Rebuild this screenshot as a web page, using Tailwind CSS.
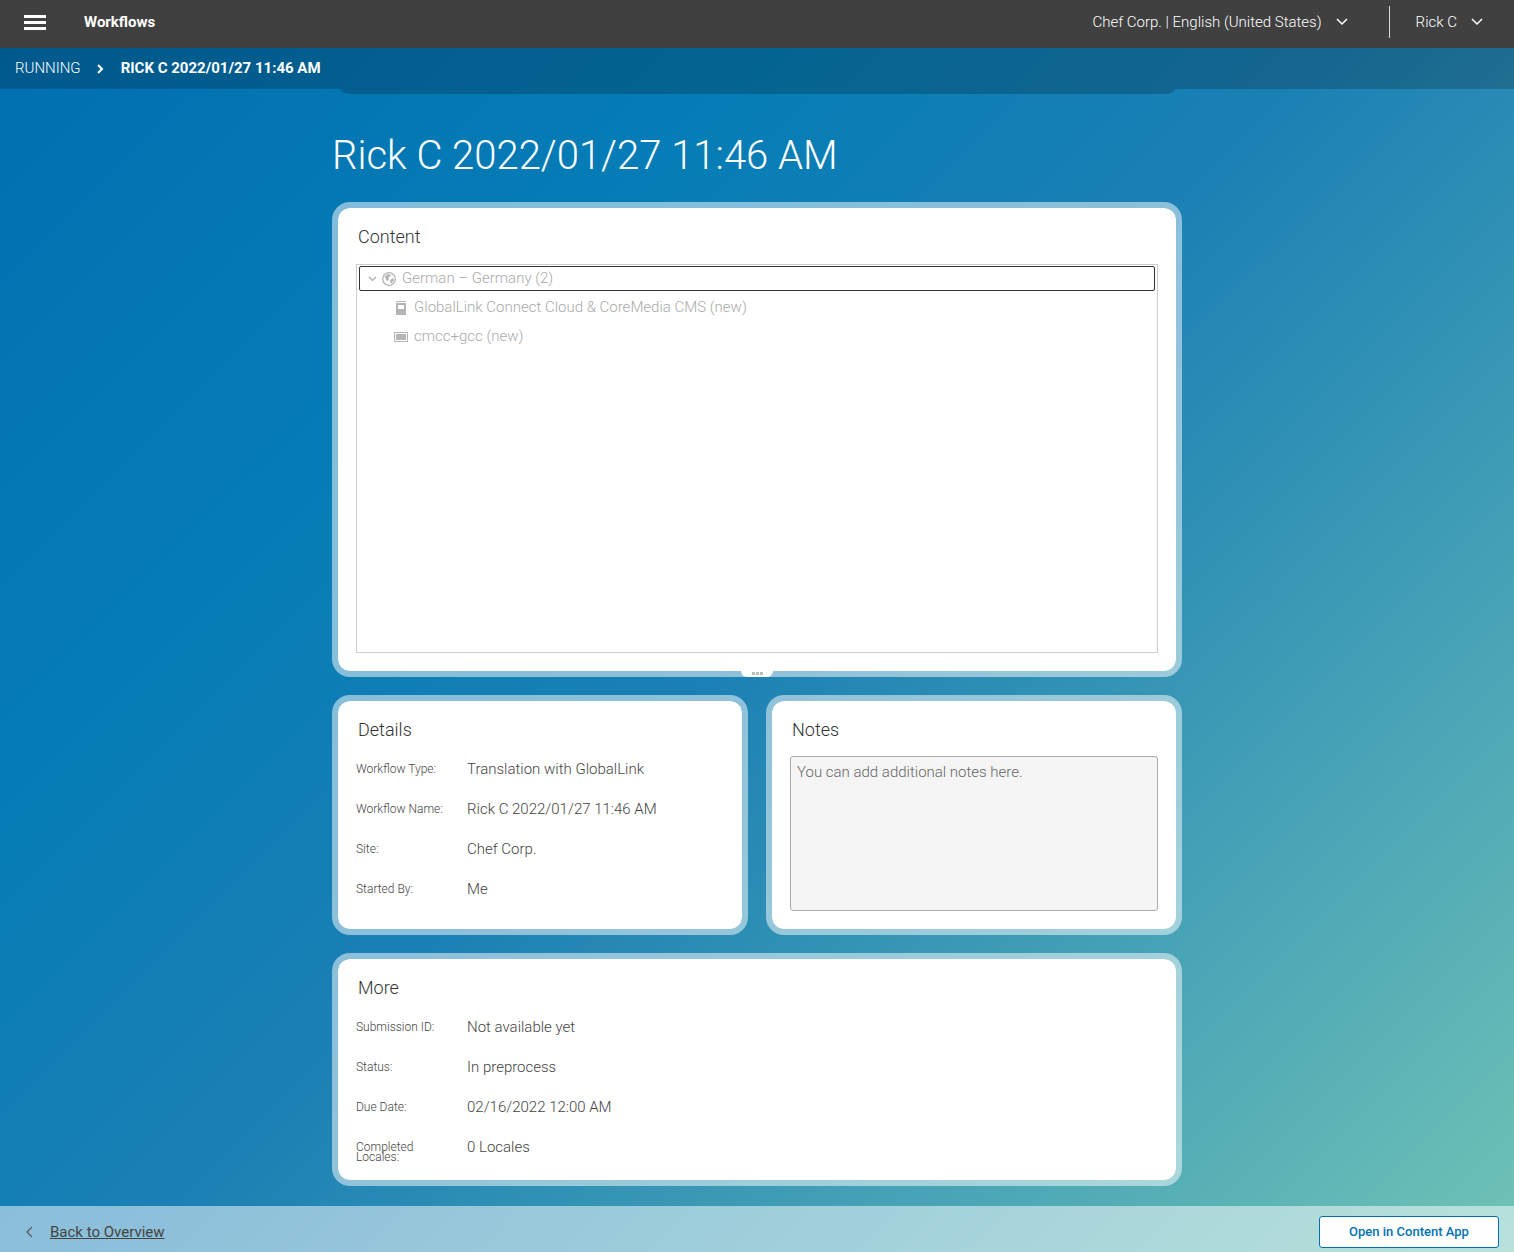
<!DOCTYPE html>
<html lang="en">
<head>
    <meta charset="UTF-8">
    <title>Workflows</title>
    <script src="https://cdn.jsdelivr.net/npm/@tailwindcss/browser@4"></script>
</head>
<body class="font-[Roboto,sans-serif]">
    <div class="relative flex flex-col h-[1252px] overflow-hidden bg-[linear-gradient(135deg,#006fb0_0%,#067db6_30%,#1b80b4_50%,#4aa5b6_78%,#70c3b5_100%)]">

        <!-- Top bar -->
        <header class="flex items-center h-12 pb-1 shrink-0 bg-[#404040] text-white">
            <svg class="ml-6 w-[22px] h-[15px]" viewBox="0 0 22 15" fill="#fff">
                <rect width="22" height="3"/><rect y="6" width="22" height="3"/><rect y="12" width="22" height="3"/>
            </svg>
            <span class="ml-[38px] text-[15px] font-bold">Workflows</span>
            <span class="ml-auto text-[15px] font-light">Chef Corp. | English (United States)</span>
            <svg class="ml-[14px] w-3 h-2" viewBox="0 0 12 8" fill="none" stroke="#fff" stroke-width="1.5"><path d="M1 1l5 5 5-5"/></svg>
            <div class="ml-[41px] w-px h-8 bg-white/80"></div>
            <span class="ml-[26px] text-[15px] font-light">Rick C</span>
            <svg class="ml-[14px] mr-[31px] w-3 h-2" viewBox="0 0 12 8" fill="none" stroke="#fff" stroke-width="1.5"><path d="M1 1l5 5 5-5"/></svg>
        </header>

        <!-- Breadcrumb -->
        <nav class="relative flex items-center h-[41px] shrink-0 pl-[15px] bg-black/20 text-white text-[15px]">
            <span class="font-light">RUNNING</span>
            <svg class="ml-4 w-[7px] h-[10px]" viewBox="0 0 7 10" fill="none" stroke="#fff" stroke-width="2"><path d="M1 1l4 4-4 4"/></svg>
            <span class="ml-[17px] font-bold">RICK C 2022/01/27 11:46 AM</span>
            <div class="absolute left-[340px] top-[41px] w-[835px] h-[5px] rounded-bl-[10px_5px] rounded-br-[10px_5px] bg-black/20"></div>
        </nav>

        <!-- Main column -->
        <main class="w-[850px] mx-auto pt-[42px]">
            <h1 class="h-[50px] mb-[21px] text-[40px] leading-[50px] font-light text-white">Rick C 2022/01/27 11:46 AM</h1>

            <section class="relative h-[475px] mb-[18px] px-[18px] pt-[17px] border-[6px] border-white/50 bg-white bg-clip-padding rounded-[18px]">
                <h2 class="pl-[2px] text-lg leading-6 font-light text-[#333]">Content</h2>
                <div class="h-[389px] mt-[15px] px-[2px] pt-px border border-[#ccc] text-[15px] font-light text-[#aaa]">
                    <div class="flex items-center h-[25px] pl-2 border border-[#333] rounded-[2px]">
                        <svg class="w-[9px] h-[6px]" viewBox="0 0 9 6" fill="none" stroke="#aaa" stroke-width="1.2"><path d="M1 1l3.500 3.500L8 1"/></svg>
                        <svg class="ml-[5px] w-[14px] h-[14px]" viewBox="0 0 14 14">
                            <circle cx="7" cy="7" r="6.300" fill="none" stroke="#b5b5b5" stroke-width="1.300"/>
                            <path d="M2.500 4.500L6 2l3 .8-1 2-1.500.5L7 8 5 9 3.500 6.500zM8 8l3-2 1 2-2.500 3.500L8.500 11z" fill="#b5b5b5"/>
                        </svg>
                        <span class="ml-[6px]">German – Germany (2)</span>
                    </div>
                    <div class="flex items-center h-[29px] mt-[2px] pl-[37px]">
                        <svg class="w-[10px] h-[14px]" viewBox="0 0 10 14" fill="#b5b5b5">
                            <rect width="10" height="1"/><rect y="2" width="10" height="12"/><rect x="2" y="4" width="6" height="4" fill="#fff"/>
                        </svg>
                        <span class="ml-2">GlobalLink Connect Cloud &amp; CoreMedia CMS (new)</span>
                    </div>
                    <div class="flex items-center h-[29px] pl-[35px]">
                        <svg class="w-[14px] h-[10px]" viewBox="0 0 14 10">
                            <rect x=".5" y=".5" width="13" height="9" fill="#fff" stroke="#b5b5b5"/><rect x="2" y="2" width="10" height="6" fill="#b5b5b5"/>
                        </svg>
                        <span class="ml-[6px]">cmcc+gcc (new)</span>
                    </div>
                </div>
                <div class="absolute left-[403px] -bottom-[6px] flex items-start justify-center gap-px pt-px w-8 h-[6px] rounded-b-[6px] bg-white">
                    <i class="w-[3px] h-[3px] bg-[#bbb]"></i><i class="w-[3px] h-[3px] bg-[#bbb]"></i><i class="w-[3px] h-[3px] bg-[#bbb]"></i>
                </div>
            </section>

            <div class="flex gap-[18px] mb-[18px]">
                <section class="w-[416px] h-[240px] px-[18px] pt-[17px] border-[6px] border-white/50 bg-white bg-clip-padding rounded-[18px]">
                    <h2 class="pl-[2px] text-lg leading-6 font-light text-[#333]">Details</h2>
                    <dl class="mt-[7px] text-[#444]">
                        <div class="flex items-center h-10"><dt class="w-[111px] text-xs font-light">Workflow Type:</dt><dd class="text-[15px] font-light">Translation with GlobalLink</dd></div>
                        <div class="flex items-center h-10"><dt class="w-[111px] text-xs font-light">Workflow Name:</dt><dd class="text-[15px] font-light">Rick C 2022/01/27 11:46 AM</dd></div>
                        <div class="flex items-center h-10"><dt class="w-[111px] text-xs font-light">Site:</dt><dd class="text-[15px] font-light">Chef Corp.</dd></div>
                        <div class="flex items-center h-10"><dt class="w-[111px] text-xs font-light">Started By:</dt><dd class="text-[15px] font-light">Me</dd></div>
                    </dl>
                </section>
                <section class="w-[416px] h-[240px] px-[18px] pt-[17px] border-[6px] border-white/50 bg-white bg-clip-padding rounded-[18px]">
                    <h2 class="pl-[2px] text-lg leading-6 font-light text-[#333]">Notes</h2>
                    <textarea class="block w-full h-[155px] mt-[14px] px-[6px] py-1 resize-none border border-[#aaa] rounded-[3px] bg-[#f5f5f5] text-[15px] font-light placeholder:text-[#666]" placeholder="You can add additional notes here."></textarea>
                </section>
            </div>

            <section class="h-[233px] px-[18px] pt-[17px] border-[6px] border-white/50 bg-white bg-clip-padding rounded-[18px]">
                <h2 class="pl-[2px] text-lg leading-6 font-light text-[#333]">More</h2>
                <dl class="mt-[7px] text-[#444]">
                    <div class="flex items-center h-10"><dt class="w-[111px] text-xs font-light">Submission ID:</dt><dd class="text-[15px] font-light">Not available yet</dd></div>
                    <div class="flex items-center h-10"><dt class="w-[111px] text-xs font-light">Status:</dt><dd class="text-[15px] font-light">In preprocess</dd></div>
                    <div class="flex items-center h-10"><dt class="w-[111px] text-xs font-light">Due Date:</dt><dd class="text-[15px] font-light">02/16/2022 12:00 AM</dd></div>
                    <div class="flex items-center h-10"><dt class="w-[111px] pr-[20px] pt-[10px] text-xs leading-[10px] font-light">Completed Locales:</dt><dd class="text-[15px] font-light">0 Locales</dd></div>
                </dl>
            </section>
        </main>

        <!-- Footer -->
        <footer class="flex items-center h-[46px] pt-[6px] mt-auto shrink-0 bg-white/50">
            <svg class="ml-[26px] w-[7px] h-3" viewBox="0 0 7 12" fill="none" stroke="#555" stroke-width="1.200"><path d="M6 1L1 6l5 5"/></svg>
            <a class="ml-[17px] text-[15px] text-[#444] underline">Back to Overview</a>
            <button class="ml-auto mr-[15px] w-[180px] h-8 border border-[#0072b3] rounded-[3px] bg-white text-[13px] font-medium text-[#0072b3]">Open in Content App</button>
        </footer>
    </div>
</body>
</html>
